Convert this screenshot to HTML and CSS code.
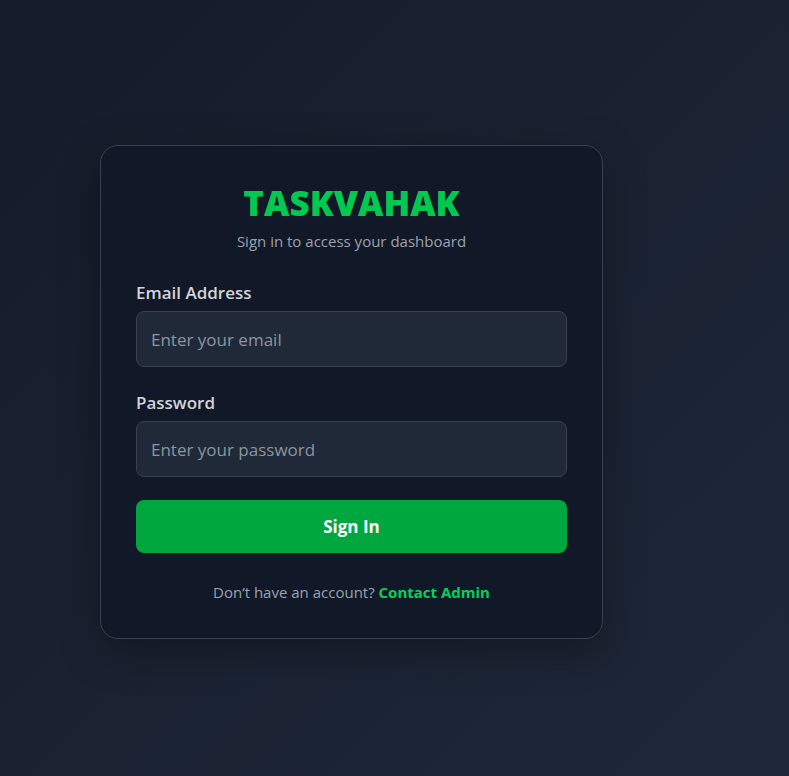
FILE: index.html
```html
<!DOCTYPE html>
<html lang="en">
<head>
<meta charset="utf-8">
<title>TaskVahak Login</title>
<link rel="stylesheet" href="styles.css">
</head>
<body>
<main class="page">
  <section class="card">
    <h1 class="brand">TASKVAHAK</h1>
    <p class="subtitle">Sign in to access your dashboard</p>
    <form class="form">
      <div class="field">
        <label class="label" for="email">Email Address</label>
        <input class="input" id="email" type="email" placeholder="Enter your email">
      </div>
      <div class="field">
        <label class="label" for="password">Password</label>
        <input class="input" id="password" type="password" placeholder="Enter your password">
      </div>
      <button class="btn" type="button">Sign In</button>
    </form>
    <p class="footer">Don’t have an account? <a class="link" href="#">Contact Admin</a></p>
  </section>
</main>
</body>
</html>
```

FILE: styles.css
```css
* { box-sizing: border-box; }
html, body { margin: 0; height: 100%; }
body {
  font-family: "Open Sans", "Noto Sans", sans-serif;
  background: linear-gradient(135deg, #141b2a 0%, #1a2232 50%, #1e2838 100%);
  color: #e5e7eb;
}
.page {
  min-height: 100%;
  display: flex;
  align-items: flex-start;
  padding: 145px 0 0 100px;
}
.card {
  width: 503px;
  background: #111827;
  border: 1px solid #374151;
  border-radius: 18px;
  padding: 36px 35px 35px;
  box-shadow: 0 12px 40px rgba(0, 0, 0, 0.35);
}
.brand {
  margin: 0;
  text-align: center;
  font-family: "Open Sans", sans-serif;
  font-weight: 800;
  font-size: 35px;
  line-height: 42px;
  letter-spacing: 0;
  color: #00c951;
}
.subtitle {
  margin: 6px 0 0;
  text-align: center;
  font-size: 15px;
  line-height: 22px;
  color: #9ca3af;
}
.form {
  margin-top: 30px;
  display: flex;
  flex-direction: column;
}
.field + .field { margin-top: 25px; }
.label {
  display: block;
  font-size: 17px;
  font-weight: 600;
  line-height: 22px;
  color: #d1d5db;
  margin-bottom: 7px;
}
.input {
  display: block;
  width: 100%;
  height: 56px;
  padding: 0 14px;
  background: #1f2937;
  border: 1px solid #374151;
  border-radius: 8px;
  color: #e5e7eb;
  font-family: inherit;
  font-size: 17px;
  outline: none;
}
.input::placeholder { color: #8b95a3; }
.btn {
  display: block;
  width: 100%;
  height: 53px;
  margin-top: 23px;
  border: 0;
  border-radius: 8px;
  background: #00a63e;
  color: #ffffff;
  font-family: inherit;
  font-size: 17px;
  font-weight: 700;
}
.footer {
  margin: 28px 0 0;
  text-align: center;
  font-size: 15px;
  line-height: 22px;
  color: #9ca3af;
}
.link {
  color: #00d25b;
  font-weight: 700;
  text-decoration: none;
}
```
